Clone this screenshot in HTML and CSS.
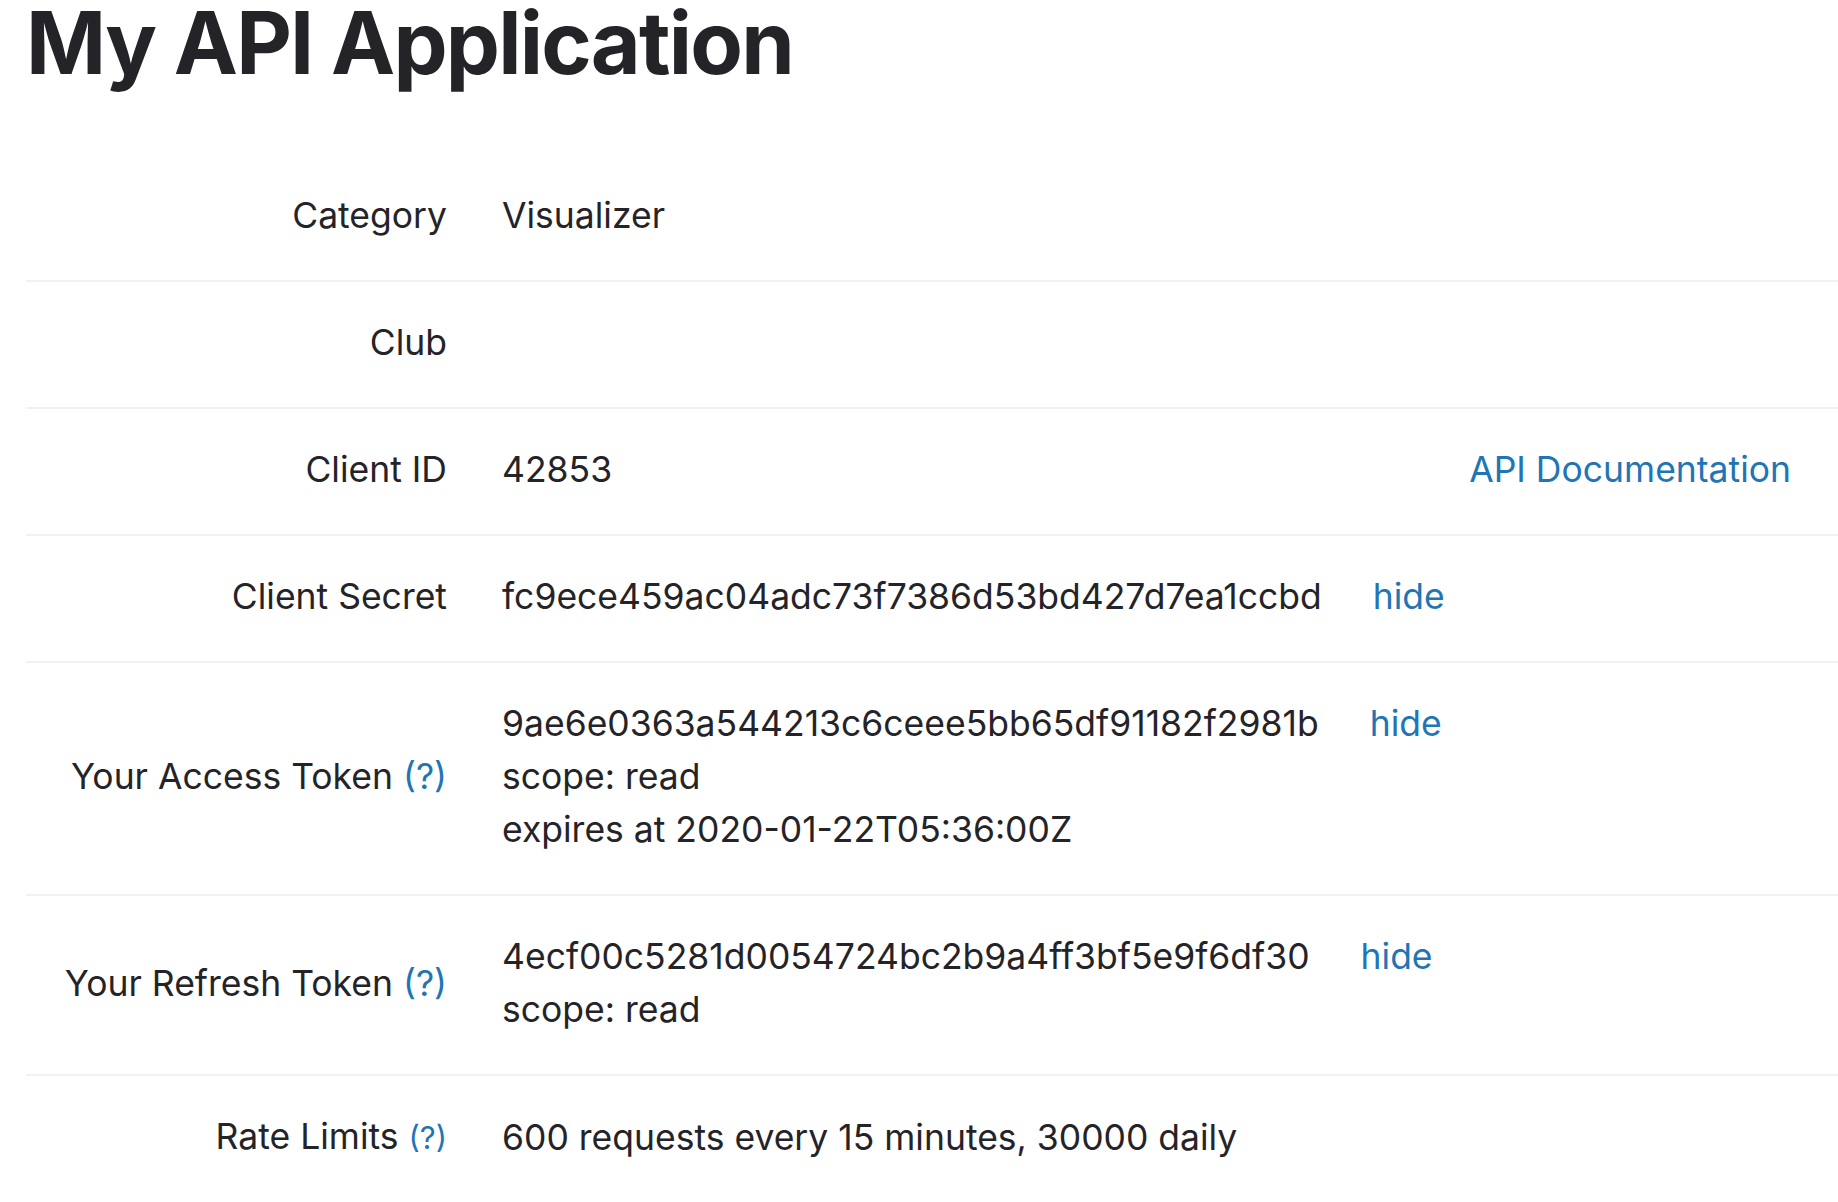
FILE: index.html
```html
<!DOCTYPE html>
<html lang="en">
<head>
<meta charset="utf-8">
<title>My API Application</title>
<link rel="stylesheet" href="styles.css">
</head>
<body>
<main class="page">
  <h1 class="title">My API Application</h1>
  <div class="details">
    <div class="row">
      <div class="label">Category</div>
      <div class="value">Visualizer</div>
    </div>
    <div class="row">
      <div class="label">Club</div>
      <div class="value"></div>
    </div>
    <div class="row">
      <div class="label">Client ID</div>
      <div class="value value-split">
        <span>42853</span>
        <a class="link doc-link" href="#">API Documentation</a>
      </div>
    </div>
    <div class="row">
      <div class="label">Client Secret</div>
      <div class="value"><span>fc9ece459ac04adc73f7386d53bd427d7ea1ccbd</span><a class="link hide" href="#">hide</a></div>
    </div>
    <div class="row">
      <div class="label">Your Access Token <a class="link help" href="#">(?)</a></div>
      <div class="value">
        <div><span>9ae6e0363a544213c6ceee5bb65df91182f2981b</span><a class="link hide" href="#">hide</a></div>
        <div>scope: read</div>
        <div>expires at 2020-01-22T05:36:00Z</div>
      </div>
    </div>
    <div class="row">
      <div class="label">Your Refresh Token <a class="link help" href="#">(?)</a></div>
      <div class="value">
        <div><span>4ecf00c5281d0054724bc2b9a4ff3bf5e9f6df30</span><a class="link hide" href="#">hide</a></div>
        <div>scope: read</div>
      </div>
    </div>
    <div class="row">
      <div class="label">Rate Limits <a class="link help help-small" href="#">(?)</a></div>
      <div class="value">600 requests every 15 minutes, 30000 daily</div>
    </div>
  </div>
</main>
</body>
</html>
```

FILE: styles.css
```css
html, body {
  margin: 0;
  padding: 0;
  background: #ffffff;
}

body {
  font-family: "Inter", "Liberation Sans", sans-serif;
  color: #242428;
  font-size: 35.5px;
  line-height: 53px;
}

.page {
  padding-left: 26px;
}

.title {
  margin: 0 0 69px 0;
  font-size: 86px;
  line-height: 1;
  font-weight: 700;
  letter-spacing: -1.8px;
  color: #242428;
}

.details {
  display: flex;
  flex-direction: column;
}

.row {
  display: grid;
  grid-template-columns: 421px 1fr;
  column-gap: 55px;
  align-items: center;
  padding: 34px 0 38px 0;
  border-bottom: 2px solid #f0f0f5;
  min-height: 53px;
}

.label {
  text-align: right;
}

.value {
  min-height: 53px;
}

.value-split {
  display: flex;
  justify-content: space-between;
  padding-right: 47px;
}

.link {
  color: #2275b5;
  text-decoration: none;
}

.hide {
  margin-left: 51px;
}

.help-small {
  font-size: 31px;
}
```
